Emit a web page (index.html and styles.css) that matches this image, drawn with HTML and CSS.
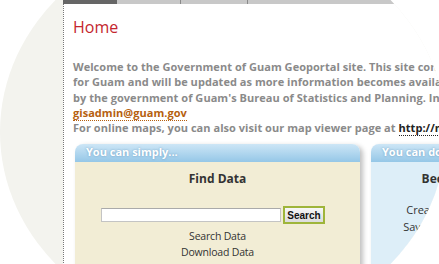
FILE: index.html
```html
<!DOCTYPE html>
<html lang="en">
  <head>
    <meta charset="UTF-8" />
    <meta name="viewport" content="width=device-width, initial-scale=1.0" />
    <title>Guam Geoportal - Home</title>
    <link rel="stylesheet" href="styles.css">
  </head>
  <body>
    <div class="lens">
      <div class="site">
        <div class="tabs">
          <span class="tab active"></span>
          <span class="tab first"></span>
          <span class="tab"></span>
          <span class="tab wide"></span>
        </div>

        <div class="content">
          <h1>Home</h1>

          <p class="intro">
            Welcome to the Government of Guam Geoportal site. This site contains geospatial data<br />
            for Guam and will be updated as more information becomes available. It is maintained<br />
            by the government of Guam's Bureau of Statistics and Planning. Inquiries can be sent to<br />
            <a class="mail" href="#">gisadmin@guam.gov</a><br />
            For online maps, you can also visit our map viewer page at <a class="url" href="#">http://maps.guam.gov</a>
          </p>

          <div class="boxes">
            <div class="box find">
              <div class="box-head">You can simply...</div>
              <div class="box-body">
                <h3>Find Data</h3>
                <form class="search">
                  <input type="text" />
                  <button type="button">Search</button>
                </form>
                <ul class="links">
                  <li>Search Data</li>
                  <li>Download Data</li>
                </ul>
              </div>
            </div>

            <div class="box more">
              <div class="box-head">You can do...</div>
              <div class="box-body">
                <h3>Become a Publisher</h3>
                <ul class="links">
                  <li>Create and Publish Metadata</li>
                  <li>Save and Share Your Searches</li>
                </ul>
              </div>
            </div>
          </div>
        </div>
      </div>
    </div>
  </body>
</html>
```

FILE: styles.css
```css
body {
  margin: 0;
  background-color: #fff;
  font-family: "Open Sans", "DejaVu Sans", sans-serif;
}

.lens {
  width: 439px;
  height: 264px;
  padding-left: 63px;
  box-sizing: border-box;
  overflow: hidden;
  background-color: #f3f3ee;
  clip-path: ellipse(223px 200px at 223px 132px);
}

.site {
  width: 640px;
}

/* top navigation strip */
.tabs {
  display: flex;
  height: 4px;
}

.tab {
  width: 66px;
  background-color: #c8c8c8;
  border-left: 1px solid #8a8a8a;
}

.tab.active {
  width: 54px;
  background-color: #666;
  border-left: none;
}

.tab.first {
  width: 63px;
  border-left: none;
}

.tab.wide {
  flex: 1;
}

.content {
  background-color: #fff;
  border-left: 1px dotted #777;
  padding: 13px 0 40px 9px;
}

.content h1 {
  margin: 0;
  font-size: 16px;
  font-weight: normal;
  line-height: 20px;
  color: #c4262e;
}

.intro {
  margin: 22px 0 0;
  font-size: 11px;
  font-weight: bold;
  line-height: 15.25px;
  letter-spacing: 0.04px;
  color: #8a8a8a;
  white-space: nowrap;
}

.intro a {
  text-decoration: none;
  border-bottom: 1px dotted;
}

.intro .mail {
  color: #b5600f;
}

.intro .url {
  color: #222;
}

/* the two info boxes */
.boxes {
  display: flex;
  gap: 11px;
  margin: 9px 0 0 2px;
}

.box {
  border-radius: 8px 8px 0 0;
  box-shadow: 3px 2px 5px rgba(0, 0, 0, 0.25);
}

.box.find {
  width: 285px;
}

.box.more {
  width: 219px;
}

.box-head {
  height: 18px;
  padding-left: 11px;
  border-radius: 8px 8px 0 0;
  background: linear-gradient(#cde6f6, #95c7e7);
  color: #fff;
  font-size: 11px;
  font-weight: bold;
  line-height: 15px;
  text-shadow: 0 0 2px rgba(40, 100, 150, 0.5);
}

.box-body {
  height: 120px;
  padding-top: 9px;
  text-align: center;
}

.find .box-body {
  background-color: #f2edd5;
}

.more .box-body {
  background-color: #ddeef8;
}

.box-body h3 {
  margin: 0;
  font-size: 12px;
  line-height: 16px;
  color: #333;
}

.search {
  display: flex;
  justify-content: center;
  align-items: center;
  gap: 2px;
  margin: 19px 0 0;
  padding-right: 9px;
}

.search input {
  width: 180px;
  height: 14px;
  box-sizing: border-box;
  padding: 0 3px;
  border: 1px solid #c4c4c4;
  border-top-color: #aaa;
  background-color: #fff;
}

.search button {
  width: 42px;
  height: 18px;
  padding: 0;
  border: 2px solid #9fb53a;
  background: linear-gradient(#f7f7f7, #dcdcdc);
  color: #111;
  font-family: "Liberation Sans", Arial, sans-serif;
  font-size: 10px;
  font-weight: bold;
}

.links {
  list-style: none;
  margin: 4px 0 0;
  padding: 0;
  font-size: 10.5px;
  letter-spacing: -0.2px;
  line-height: 16px;
  color: #333;
}

.more .links {
  margin-top: 14px;
  font-size: 11px;
  letter-spacing: 0;
  line-height: 17px;
}
```
